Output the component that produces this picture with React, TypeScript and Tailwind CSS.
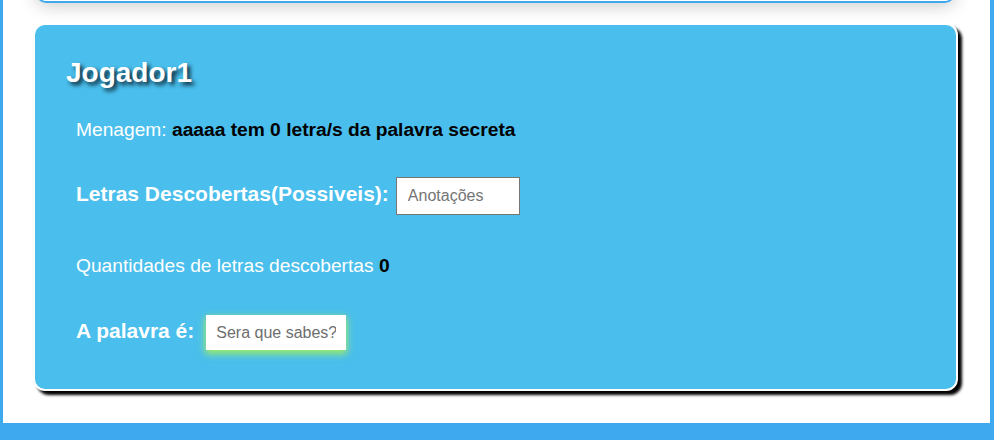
import React from "react";

function Row({ children, className = "" }: { children: React.ReactNode; className?: string }) {
  return <div className={`ml-[9px] flex items-baseline ${className}`}>{children}</div>;
}

export default function App() {
  return (
    <div className="h-[440px] overflow-hidden bg-[#3ea9ef] pl-[3px] pr-[4px] pb-[17px] font-['Liberation_Sans',Arial,sans-serif] leading-[normal]">
      <div className="h-[423px] overflow-hidden bg-white">
        {/* card anterior, quase toda fora da tela */}
        <div className="-mt-[100px] ml-[33px] mr-[35px] h-[103px] rounded-[10px] border-2 border-[#3ea9ef] bg-white shadow-[0_2px_18px_rgba(0,0,0,0.22)]" />

        <div className="ml-[30px] mr-[32px] mt-[20px] rounded-[12px] border-2 border-white bg-[#4abeec] px-[32px] pt-[32px] pb-[39px] shadow-[4px_4px_3px_#000]">
          <h2 className="-ml-px text-[28px] font-bold text-white [text-shadow:3px_3px_4px_#06202f]">
            Jogador1
          </h2>

          <p className="ml-[9px] mt-[30px] text-[19.2px] text-white">
            Menagem: <span className="font-bold text-black">aaaaa tem 0 letra/s da palavra secreta</span>
          </p>

          <Row className="mt-[36px]">
            <span className="text-[21px] font-bold text-white">Letras Descobertas(Possiveis):</span>
            <input
              type="text"
              placeholder="Anotações"
              className="ml-[7px] h-[38px] w-[124px] border border-[#767676] bg-white px-[11px] text-[16px] text-black outline-none placeholder:text-[#757575]"
            />
          </Row>

          <p className="ml-[9px] mt-[40px] text-[19.2px] text-white">
            Quantidades de letras descobertas <span className="font-bold text-black">0</span>
          </p>

          <Row className="mt-[38px]">
            <span className="text-[21px] font-bold text-white">A palavra é:</span>
            <input
              type="text"
              placeholder="Sera que sabes?"
              className="ml-[12px] h-[35px] w-[140px] bg-white px-[10px] text-[16px] text-black outline-none shadow-[0_3px_7px_1px_#9cec68] placeholder:text-[#6e6e6e]"
            />
          </Row>
        </div>
      </div>
    </div>
  );
}
